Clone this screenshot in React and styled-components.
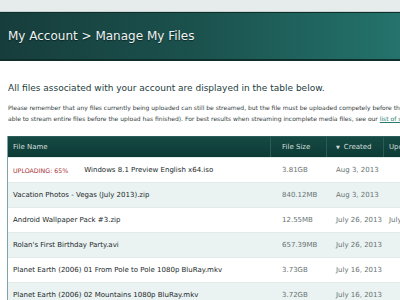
import React from "react";
import styled, { createGlobalStyle } from "styled-components";

const Global = createGlobalStyle`
  html, body { margin: 0; padding: 0; background: #ffffff; }
  body { font-family: "DejaVu Sans", Verdana, sans-serif; overflow: hidden; width: 400px; height: 300px; }
`;

const Page = styled.div`
  width: 400px;
  height: 300px;
  overflow: hidden;
  background: #fff;
`;

const TopStrip = styled.div`
  height: 11px;
  background: #e6ebeb;
  border-bottom: 1px solid #c9d3d2;
`;

const HeaderBar = styled.div`
  height: 49px;
  background: linear-gradient(90deg, #163d3b 0%, #1b524e 50%, #24736c 100%);
  border-top: 1px solid #0e2e2c;
  border-bottom: 2px solid #0f2f2d;
  display: flex;
  align-items: center;
  padding-left: 8px;
  box-sizing: border-box;
`;

const Title = styled.h1`
  margin: 0;
  font-size: 12px;
  font-weight: normal;
  color: #eef3f2;
  white-space: nowrap;
  text-shadow: 0 1px 1px rgba(0,0,0,0.5);
`;

const Content = styled.div`
  padding: 22px 0 0 8px;
`;

const Heading = styled.h2`
  margin: 0 0 9px 0;
  font-size: 9px;
  font-weight: normal;
  color: #23403e;
  white-space: nowrap;
`;

const Para = styled.p`
  margin: 0;
  font-size: 6px;
  line-height: 11px;
  color: #333c3c;
  white-space: nowrap;
`;

const Link = styled.a`
  color: #2a7a72;
  text-decoration: underline;
`;

const Table = styled.div`
  margin: 12px 0 0 -1px;
  border-left: 1px solid #7fa6a2;
  width: 420px;
`;

const HeadRow = styled.div`
  display: grid;
  grid-template-columns: 263px 56px 57px 50px;
  height: 20px;
  background: linear-gradient(180deg, #164a44 0%, #0d3a35 100%);
  border-top: 1px solid #2c5f59;
`;

const HeadCell = styled.div`
  display: flex;
  align-items: center;
  padding-left: ${p => p.$pad || 5}px;
  font-size: 7px;
  color: #d3dfdc;
  white-space: nowrap;
  border-right: ${p => p.$sep ? "1px solid #2d5a55" : "none"};
  box-sizing: border-box;
`;

const Arrow = styled.span`
  font-size: 5px;
  margin-right: 4px;
`;

const Row = styled.div`
  display: grid;
  grid-template-columns: 263px 56px 57px 50px;
  height: 25px;
  background: ${p => p.$alt ? "#eaf3f2" : "#ffffff"};
  border-top: 1px solid #e0ebea;
  box-sizing: border-box;
`;

const Cell = styled.div`
  display: flex;
  align-items: center;
  padding-left: ${p => p.$pad || 5}px;
  font-size: 7px;
  color: ${p => p.$muted ? "#687272" : "#1a2828"};
  white-space: nowrap;
  overflow: hidden;
`;

const Uploading = styled.span`
  color: #a83434;
  font-size: 6.3px;
  margin-right: 16px;
`;

const files = [
  { up: "UPLOADING: 65%", name: "Windows 8.1 Preview English x64.iso", size: "3.81GB", created: "Aug 3, 2013", upd: "" },
  { name: "Vacation Photos - Vegas (July 2013).zip", size: "840.12MB", created: "Aug 3, 2013", upd: "" },
  { name: "Android Wallpaper Pack #3.zip", size: "12.55MB", created: "July 26, 2013", upd: "July 26, 2013" },
  { name: "Rolan's First Birthday Party.avi", size: "657.39MB", created: "July 26, 2013", upd: "" },
  { name: "Planet Earth (2006) 01 From Pole to Pole 1080p BluRay.mkv", size: "3.73GB", created: "July 16, 2013", upd: "" },
  { name: "Planet Earth (2006) 02 Mountains 1080p BluRay.mkv", size: "3.72GB", created: "July 16, 2013", upd: "" },
];

export default function App() {
  return (
    <Page>
      <Global />
      <TopStrip />
      <HeaderBar>
        <Title>My Account &gt; Manage My Files</Title>
      </HeaderBar>
      <Content>
        <Heading>All files associated with your account are displayed in the table below.</Heading>
        <Para>Please remember that any files currently being uploaded can still be streamed, but the file must be uploaded competely before the</Para>
        <Para>able to stream entire files before the upload has finished). For best results when streaming incomplete media files, see our <Link>list of supported</Link></Para>
        <Table>
          <HeadRow>
            <HeadCell $sep>File Name</HeadCell>
            <HeadCell $pad={11} $sep>File Size</HeadCell>
            <HeadCell $pad={9} $sep><Arrow>▼</Arrow>Created</HeadCell>
            <HeadCell>Updated</HeadCell>
          </HeadRow>
          {files.map((f, i) => (
            <Row key={i} $alt={i % 2 === 1}>
              <Cell>{f.up && <Uploading>{f.up}</Uploading>}{f.name}</Cell>
              <Cell $muted $pad={11}>{f.size}</Cell>
              <Cell $muted $pad={9}>{f.created}</Cell>
              <Cell $muted>{f.upd}</Cell>
            </Row>
          ))}
        </Table>
      </Content>
    </Page>
  );
}
